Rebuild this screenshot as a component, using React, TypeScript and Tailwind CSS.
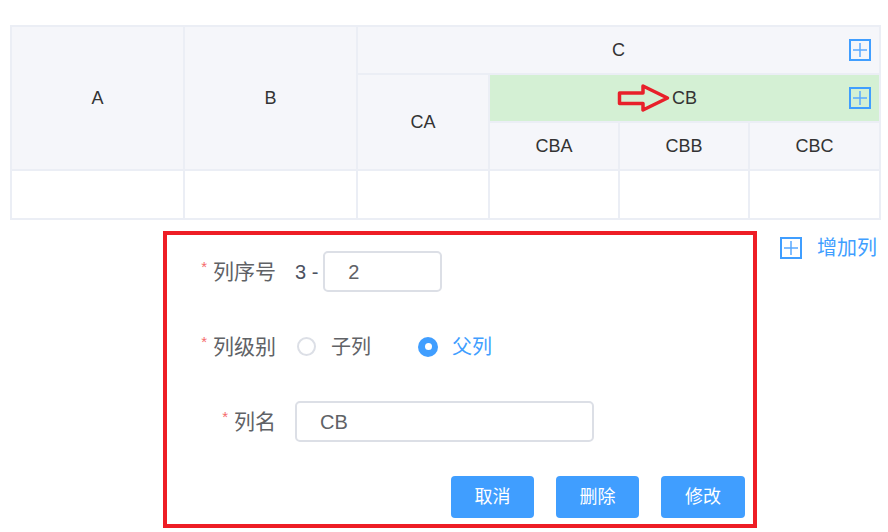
import type { ReactNode } from 'react';

function PlusBox() {
  return (
    <svg width="22" height="22" viewBox="0 0 22 22" fill="none">
      <rect x="1" y="1" width="20" height="20" stroke="#409eff" strokeWidth="2" />
      <path d="M11 4v14M4 11h14" stroke="#5aa9ff" strokeWidth="1.5" />
    </svg>
  );
}

function Arrow() {
  return (
    <svg
      width="54"
      height="31"
      viewBox="0 0 54 31"
      fill="none"
      className="absolute right-full top-1/2 -translate-y-1/2 mr-[1px]"
    >
      <path
        d="M2.5 10.5H26V3.5L50.5 15.5L26 27.5V21H2.5Z"
        stroke="#e8202a"
        strokeWidth="3.5"
        strokeLinejoin="round"
      />
    </svg>
  );
}

const th = 'border-2 border-[#ebeef5] bg-[#f5f6fa] text-center align-middle';
const td = 'border-2 border-[#ebeef5] bg-white';

function Row({ label, children }: { label: string; children: ReactNode }) {
  return (
    <div className="flex items-center h-[41px]">
      <div className="w-[128px] pr-[19px] flex justify-end items-center text-[21px] text-[#606266]">
        <span className="text-[15px] text-[#f56c6c] mr-[6px] relative -top-[4px]">*</span>
        {label}
      </div>
      {children}
    </div>
  );
}

export default function App() {
  return (
    <div className="min-h-screen bg-white pt-[25px] pl-[10px] [font-family:'Liberation_Sans','Noto_Sans_CJK_SC',sans-serif]">
      <table className="table-fixed border-collapse w-[869px] text-[18px] text-[#333]">
        <colgroup>
          <col className="w-[173px]" />
          <col className="w-[173px]" />
          <col className="w-[132px]" />
          <col className="w-[130px]" />
          <col className="w-[130px]" />
          <col className="w-[131px]" />
        </colgroup>
        <tbody>
          <tr className="h-[48px]">
            <td rowSpan={3} className={th}>A</td>
            <td rowSpan={3} className={th}>B</td>
            <td colSpan={4} className={`${th} relative`}>
              C
              <span className="absolute right-[8px] top-1/2 -translate-y-1/2 flex">
                <PlusBox />
              </span>
            </td>
          </tr>
          <tr className="h-[48px]">
            <td rowSpan={2} className={th}>CA</td>
            <td colSpan={3} className="border-2 border-[#ebeef5] bg-[#d4f0d4] text-center align-middle relative">
              <span className="relative">
                <Arrow />
                CB
              </span>
              <span className="absolute right-[8px] top-1/2 -translate-y-1/2 flex">
                <PlusBox />
              </span>
            </td>
          </tr>
          <tr className="h-[48px]">
            <td className={th}>CBA</td>
            <td className={th}>CBB</td>
            <td className={th}>CBC</td>
          </tr>
          <tr className="h-[49px]">
            <td className={td} />
            <td className={td} />
            <td className={td} />
            <td className={td} />
            <td className={td} />
            <td className={td} />
          </tr>
        </tbody>
      </table>

      <div className="mt-[11px] flex items-start">
        <div className="ml-[153px] w-[594px] h-[297px] border-4 border-[#ee1d25] pt-[16px] pr-[8px] flex flex-col">
          <div className="flex flex-col gap-[34px]">
            <Row label="列序号">
              <span className="text-[20px] text-[#4b5160] mr-[5px]">3 -</span>
              <div className="w-[119px] h-[41px] border-2 border-[#dcdfe6] rounded-[5px] pl-[23px] flex items-center text-[20px] text-[#606266]">
                2
              </div>
            </Row>
            <Row label="列级别">
              <span className="ml-[2px] w-[19px] h-[19px] rounded-full border-2 border-[#dcdfe6] bg-white" />
              <span className="ml-[15px] text-[20px] text-[#606266]">子列</span>
              <span className="ml-[47px] w-[20px] h-[20px] rounded-full bg-[#409eff] flex items-center justify-center">
                <span className="w-[7px] h-[7px] rounded-full bg-white" />
              </span>
              <span className="ml-[14px] text-[20px] text-[#409eff]">父列</span>
            </Row>
            <Row label="列名">
              <div className="w-[299px] h-[41px] border-2 border-[#dcdfe6] rounded-[5px] pl-[23px] flex items-center text-[20px] text-[#606266]">
                CB
              </div>
            </Row>
          </div>
          <div className="mt-[34px] flex justify-end gap-[22px]">
            <button className="w-[83px] h-[42px] rounded-[4px] bg-[#409eff] text-white text-[18px]">取消</button>
            <button className="w-[83px] h-[42px] rounded-[4px] bg-[#409eff] text-white text-[18px]">删除</button>
            <button className="w-[84px] h-[42px] rounded-[4px] bg-[#409eff] text-white text-[18px]">修改</button>
          </div>
        </div>
        <div className="ml-[23px] mt-[2px] flex items-center gap-[15px] text-[20px] text-[#409eff]">
          <PlusBox />
          <span>增加列</span>
        </div>
      </div>
    </div>
  );
}
